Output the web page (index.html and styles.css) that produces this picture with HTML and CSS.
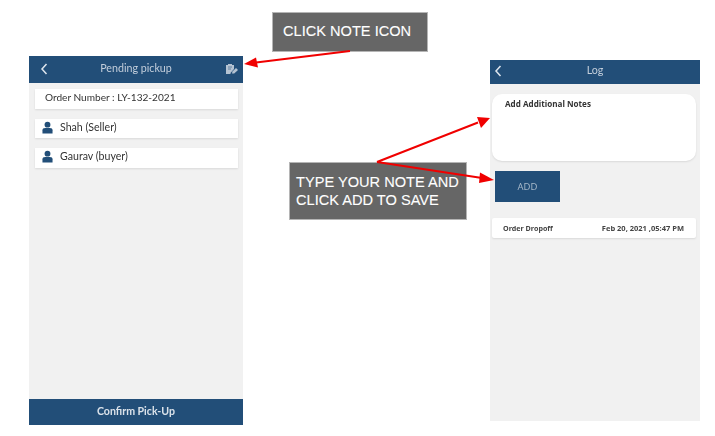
FILE: index.html
```html
<!DOCTYPE html>
<html lang="en">
<head>
  <meta charset="UTF-8" />
  <meta name="viewport" content="width=device-width, initial-scale=1.0"/>
  <title>Add a note</title>
  <link rel="stylesheet" href="styles.css">
</head>
<body>
  <div class="page">
    <div class="phone phone-pickup">
      <div class="topbar">
        <svg class="back" viewBox="0 0 8 12" width="8" height="12"><path d="M6.5 1 L2 6 L6.5 11" fill="none" stroke="#dfe6ee" stroke-width="1.5"/></svg>
        <span class="title">Pending pickup</span>
        <svg class="note-icon" viewBox="0 0 14 12" width="14" height="12">
          <path d="M1 2 H3 V1 H7 V2 H9 V6 L5.5 10 V11 H1 Z" fill="#b5c3d2"/>
          <path d="M3 4 H7 M3 6 H6" stroke="#4f7092" stroke-width="0.8"/>
          <path d="M7 10.5 L7.4 8.4 L11 5 L13 7 L9.2 10.4 Z" fill="#b5c3d2"/>
        </svg>
      </div>
      <div class="pickup-list">
        <div class="row">Order Number : LY-132-2021</div>
        <div class="row row-person">
          <svg class="person" viewBox="0 0 12 13" width="11" height="13"><circle cx="6" cy="3.4" r="3.2"/><path d="M0.5 13 V9.5 Q0.5 7 3.5 7 H8.5 Q11.5 7 11.5 9.5 V13 Z"/></svg>
          <span class="person-name">Shah (Seller)</span>
        </div>
        <div class="row row-person">
          <svg class="person" viewBox="0 0 12 13" width="11" height="13"><circle cx="6" cy="3.4" r="3.2"/><path d="M0.5 13 V9.5 Q0.5 7 3.5 7 H8.5 Q11.5 7 11.5 9.5 V13 Z"/></svg>
          <span class="person-name">Gaurav (buyer)</span>
        </div>
      </div>
      <div class="confirm">Confirm Pick-Up</div>
    </div>

    <div class="phone phone-log">
      <div class="topbar topbar-log">
        <svg class="back" viewBox="0 0 8 12" width="8" height="12"><path d="M6.5 1 L2 6 L6.5 11" fill="none" stroke="#dfe6ee" stroke-width="1.5"/></svg>
        <span class="title">Log</span>
      </div>
      <div class="log-body">
        <div class="notes">Add Additional Notes</div>
        <div class="add">ADD</div>
        <div class="log-row">
          <span>Order Dropoff</span>
          <span class="log-date">Feb 20, 2021 ,05:47 PM</span>
        </div>
      </div>
    </div>

    <div class="callout callout-icon">CLICK NOTE ICON</div>
    <div class="callout callout-type">TYPE YOUR NOTE AND<br>CLICK ADD TO SAVE</div>

    <svg class="arrows" viewBox="0 0 715 436" width="715" height="436">
      <path d="M350 51 L256 62.5 M377 162 L478 122.5 M377 162 L482 178" stroke="#f00000" stroke-width="2" fill="none"/>
      <path d="M244 64 L256 57.5 L258 67.5 Z" fill="#f00000"/>
      <path d="M490 118 L477 117 L481 128 Z" fill="#f00000"/>
      <path d="M494 180 L480 172.500 L479 183 Z" fill="#f00000"/>
    </svg>
  </div>
</body>
</html>
```

FILE: styles.css
```css
* {
  box-sizing: border-box;
}

body {
  margin: 0;
  background-color: #fff;
  font-family: Lato, "Open Sans", sans-serif;
  color: #333;
}

.page {
  position: relative;
  width: 715px;
  height: 436px;
  overflow: hidden;
  display: flex;
  justify-content: space-between;
  align-items: flex-start;
  padding: 56px 15px 0 29px;
}

.phone {
  display: flex;
  flex-direction: column;
  background-color: #f1f1f1;
  filter: blur(0.45px);
}

.phone-pickup {
  width: 214px;
  height: 369px;
}

.phone-log {
  width: 210px;
  height: 361px;
  margin-top: 4px;
}

.topbar {
  position: relative;
  height: 27px;
  flex-shrink: 0;
  display: flex;
  align-items: center;
  justify-content: center;
  padding-bottom: 5px;
  background-color: #224e78;
}

.topbar-log {
  height: 24px;
}

.title {
  font-size: 10.7px;
  color: #c3cedb;
}

.back {
  position: absolute;
  left: 11px;
  top: 7px;
}

.topbar-log .back {
  left: 4px;
  top: 5px;
}

.note-icon {
  position: absolute;
  right: 4px;
  top: 7px;
}

.pickup-list {
  flex: 1;
  display: flex;
  flex-direction: column;
  gap: 10px;
  padding: 6px 5px 0 6px;
}

.row {
  height: 19.5px;
  display: flex;
  align-items: center;
  gap: 7px;
  padding: 0 0 3px 10px;
  background-color: #fff;
  box-shadow: 0 1px 2px rgba(0, 0, 0, 0.1);
  font-size: 10.1px;
}

.row-person {
  padding-left: 7px;
}

.person-name {
  font-size: 10.6px;
}

.person {
  fill: #224e78;
  flex-shrink: 0;
  margin-top: 1px;
}

.confirm {
  height: 26px;
  flex-shrink: 0;
  display: flex;
  align-items: center;
  justify-content: center;
  padding-bottom: 2px;
  background-color: #224e78;
  color: #dbe2ea;
  font-size: 10.6px;
  font-weight: 700;
}

.log-body {
  display: flex;
  flex-direction: column;
  align-items: flex-start;
  padding: 10px 4px 0 2px;
  font-family: "Open Sans", sans-serif;
}

.notes {
  width: 100%;
  height: 67px;
  padding: 4px 13px;
  background-color: #fff;
  border-radius: 10px;
  box-shadow: 0 1px 2px rgba(0, 0, 0, 0.1);
  font-size: 8.1px;
  font-weight: 700;
}

.add {
  width: 65px;
  height: 31px;
  margin: 10px 0 16px 3px;
  padding-bottom: 1px;
  display: flex;
  align-items: center;
  justify-content: center;
  background-color: #224e78;
  color: #a9bacb;
  font-size: 9.5px;
}

.log-row {
  width: 100%;
  height: 20px;
  display: flex;
  align-items: center;
  justify-content: space-between;
  padding: 0 12px 1px 11px;
  background-color: #fff;
  border-radius: 2px;
  box-shadow: 0 1px 2px rgba(0, 0, 0, 0.1);
  font-size: 7.1px;
  font-weight: 700;
  color: #444;
}

.log-date {
  font-size: 7.5px;
}

.arrows {
  position: absolute;
  left: 0;
  top: 0;
}

.callout {
  position: absolute;
  background-color: #666;
  border: 1px solid #b5b5b5;
  color: #fff;
  font-family: "Liberation Sans", Arial, sans-serif;
  font-size: 14.6px;
  line-height: 18px;
  -webkit-text-stroke: 0.1px #fff;
  white-space: nowrap;
}

.callout-icon {
  left: 272px;
  top: 12px;
  width: 156px;
  height: 40px;
  padding: 9px 10px;
}

.callout-type {
  left: 289px;
  top: 162px;
  width: 178px;
  height: 58px;
  padding: 10px 6px;
}
```
